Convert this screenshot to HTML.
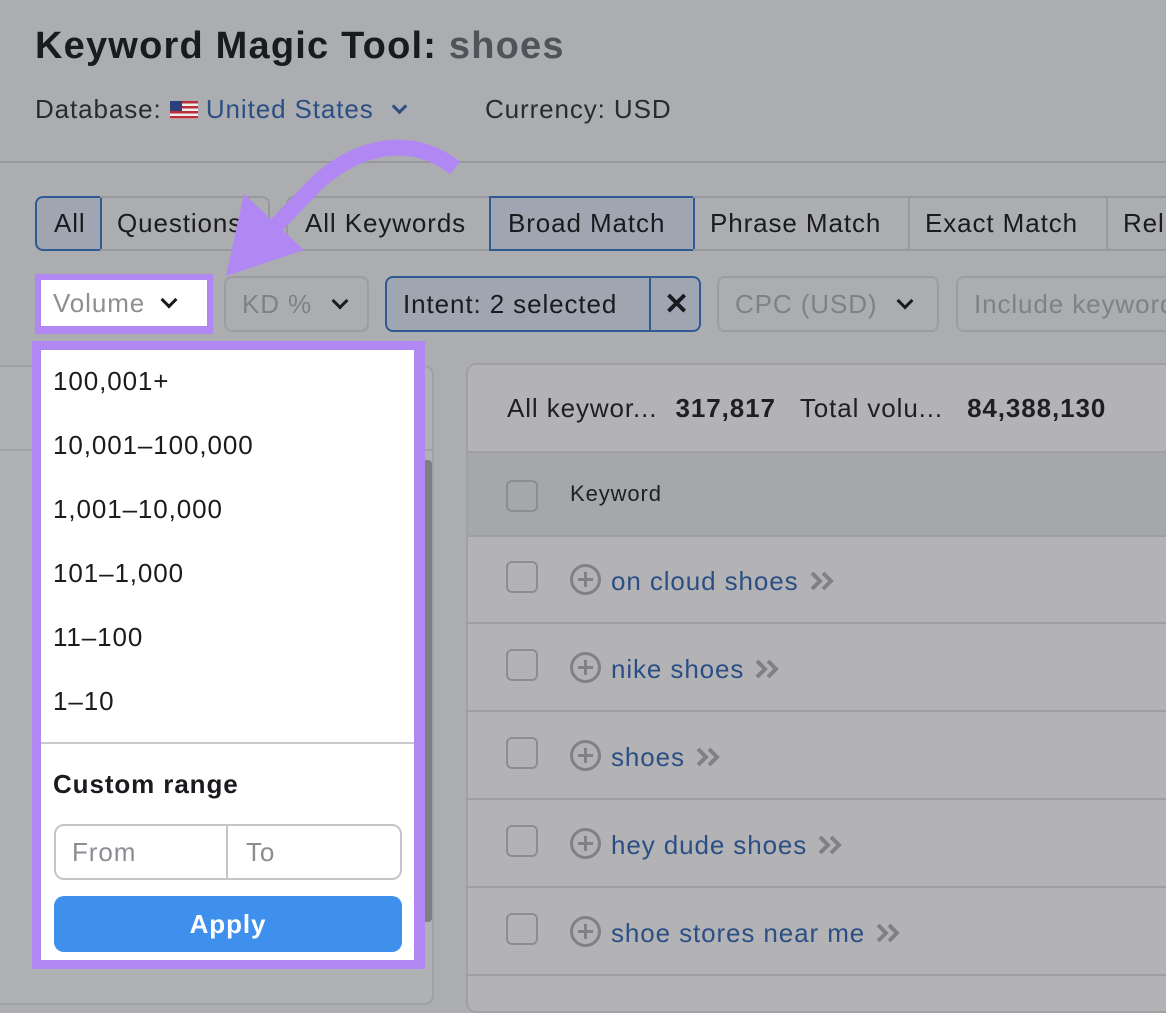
<!DOCTYPE html>
<html><head><meta charset="utf-8"><style>
*{box-sizing:border-box;margin:0;padding:0}
body{width:1166px;height:994px;overflow:hidden;background:#acadb0;font-family:"Liberation Sans",sans-serif;position:relative;color:#1a1b1f;letter-spacing:0.9px}
.a{position:absolute}
.t{white-space:nowrap}
.btn{position:absolute;height:55px;border:2px solid #98999c;font-size:26px;line-height:51px;padding-left:17px;white-space:nowrap}
.sel{background:#a0a6b1;border-color:#2f5b92}
.f{position:absolute;height:56px;border:2px solid #9c9da0;border-radius:8px;font-size:26px;line-height:52px;padding-left:16px;color:#7f8185;white-space:nowrap}
.chev{display:inline-block;width:12px;height:12px;border-right:3.5px solid #1a1b1f;border-bottom:3.5px solid #1a1b1f;transform:rotate(45deg);margin-left:22px;vertical-align:6px}
.cb{position:absolute;left:506px;width:32px;height:32px;border:2px solid #8c8d91;border-radius:6px}
.kw{position:absolute;left:570px;font-size:26px;color:#2b4f85;white-space:nowrap}
.kw .p{display:inline-block;width:31px;height:31px;border:3px solid #808185;border-radius:50%;vertical-align:-5px;margin-right:10px;position:relative}
.kw .p:before{content:"";position:absolute;left:5px;top:11px;width:15px;height:3px;background:#808185}
.kw .p:after{content:"";position:absolute;left:11px;top:5px;width:3px;height:15px;background:#808185}
.kw svg{vertical-align:-2px;margin-left:10px}
.line{position:absolute;left:466px;right:0;height:2px;background:#9e9fa2}
.it{position:absolute;left:53px;font-size:26px;color:#1a1b1f}
</style></head><body>
<div class="a t" style="left:35px;top:25px;font-size:38px;font-weight:bold;letter-spacing:1.2px">Keyword Magic Tool: <span style="color:#505358">shoes</span></div>
<div class="a t" style="left:35px;top:94px;font-size:26px;color:#2a2b2f">Database: <span style="display:inline-block;width:28px;height:18px;background:repeating-linear-gradient(#b8303a 0 2.5px,#eee 2.5px 5px);position:relative;vertical-align:-1px"><span style="position:absolute;left:0;top:0;width:12px;height:10px;background:#2d3f7a"></span></span> <span style="color:#2b4f85">United States</span> <span class="chev" style="border-color:#2b4f85;margin-left:12px;width:11px;height:11px"></span></div>
<div class="a t" style="left:485px;top:94px;font-size:26px;color:#2a2b2f">Currency: USD</div>
<div class="a" style="left:0;top:161px;width:1166px;height:2px;background:#98999c"></div>

<div class="btn sel" style="left:35px;top:196px;width:67px;border-radius:8px 0 0 8px">All</div>
<div class="btn" style="left:100px;top:196px;width:170px;border-radius:0 8px 8px 0;border-left:none">Questions</div>
<div class="btn" style="left:286px;top:196px;width:205px;border-radius:8px 0 0 8px">All Keywords</div>
<div class="btn sel" style="left:489px;top:196px;width:206px">Broad Match</div>
<div class="btn" style="left:693px;top:196px;width:217px;border-left:none">Phrase Match</div>
<div class="btn" style="left:908px;top:196px;width:200px;border-left:none">Exact Match</div>
<div class="btn" style="left:1106px;top:196px;width:100px;border-left:none">Related</div>

<div class="a" style="left:35px;top:274px;width:178px;height:60px;background:#b187f4"></div>
<div class="a t" style="left:41px;top:280px;width:166px;height:46px;background:#fff;font-size:26px;line-height:46px;padding-left:12px;color:#8d8f93">Volume<span class="chev" style="margin-left:18px"></span></div>
<div class="f" style="left:224px;top:276px;width:145px">KD %<span class="chev"></span></div>
<div class="f sel" style="left:385px;top:276px;width:316px;color:#1a1b1f;border-color:#2f5b92">Intent: 2 selected</div>
<div class="a" style="left:649px;top:278px;width:2px;height:52px;background:#2f5b92"></div>
<div class="a" style="left:664px;top:287px;font-size:30px;font-weight:bold;color:#1a1b1f">✕</div>
<div class="f" style="left:717px;top:276px;width:222px">CPC (USD)<span class="chev"></span></div>
<div class="f" style="left:956px;top:276px;width:260px">Include keywords</div>

<div class="a" style="left:-10px;top:365px;width:444px;height:640px;border:2px solid #a0a1a4;border-radius:10px;background:#b0b1b3"></div>
<div class="a" style="left:0;top:449px;width:434px;height:2px;background:#a0a1a4"></div>
<div class="a" style="left:422px;top:460px;width:10px;height:462px;background:#7e7f82;border-radius:4px"></div>

<div class="a" style="left:466px;top:363px;width:720px;height:650px;border:2px solid #a0a1a4;border-radius:10px;background:#b3b3b5;overflow:hidden">
 <div class="a" style="left:0;top:86px;width:720px;height:86px;background:#a6a7aa;border-top:2px solid #9e9fa2;border-bottom:2px solid #9e9fa2"></div>
</div>
<div class="a t" style="left:507px;top:393px;font-size:26px;color:#1e1f23">All keywor... <b style="margin-left:10px">317,817</b><span style="margin-left:24px">Total volu...</span><b style="margin-left:24px">84,388,130</b></div>
<div class="cb" style="top:480px"></div>
<div class="a t" style="left:570px;top:481px;font-size:22px;color:#1e1f23">Keyword</div>
<div class="cb" style="top:561px"></div><div class="kw" style="top:564px"><span class="p"></span>on cloud shoes<svg width="26" height="22"><path d="M3,3 L11,11 L3,19 M14,3 L22,11 L14,19" fill="none" stroke="#808185" stroke-width="4"/></svg></div>
<div class="line" style="top:622px"></div>
<div class="cb" style="top:649px"></div><div class="kw" style="top:652px"><span class="p"></span>nike shoes<svg width="26" height="22"><path d="M3,3 L11,11 L3,19 M14,3 L22,11 L14,19" fill="none" stroke="#808185" stroke-width="4"/></svg></div>
<div class="line" style="top:710px"></div>
<div class="cb" style="top:737px"></div><div class="kw" style="top:740px"><span class="p"></span>shoes<svg width="26" height="22"><path d="M3,3 L11,11 L3,19 M14,3 L22,11 L14,19" fill="none" stroke="#808185" stroke-width="4"/></svg></div>
<div class="line" style="top:798px"></div>
<div class="cb" style="top:825px"></div><div class="kw" style="top:828px"><span class="p"></span>hey dude shoes<svg width="26" height="22"><path d="M3,3 L11,11 L3,19 M14,3 L22,11 L14,19" fill="none" stroke="#808185" stroke-width="4"/></svg></div>
<div class="line" style="top:886px"></div>
<div class="cb" style="top:913px"></div><div class="kw" style="top:916px"><span class="p"></span>shoe stores near me<svg width="26" height="22"><path d="M3,3 L11,11 L3,19 M14,3 L22,11 L14,19" fill="none" stroke="#808185" stroke-width="4"/></svg></div>
<div class="line" style="top:974px"></div>

<div class="a" style="left:32px;top:341px;width:393px;height:628px;background:#b187f4"></div>
<div class="a" style="left:41px;top:350px;width:373px;height:610px;background:#fff"></div>
<div class="it" style="top:366px">100,001+</div>
<div class="it" style="top:430px">10,001–100,000</div>
<div class="it" style="top:494px">1,001–10,000</div>
<div class="it" style="top:558px">101–1,000</div>
<div class="it" style="top:622px">11–100</div>
<div class="it" style="top:686px">1–10</div>
<div class="a" style="left:41px;top:742px;width:373px;height:2px;background:#c8c9cd"></div>
<div class="it" style="top:769px;font-weight:bold">Custom range</div>
<div class="a" style="left:54px;top:824px;width:348px;height:56px;border:2px solid #c4c5c9;border-radius:10px"></div>
<div class="a" style="left:226px;top:826px;width:2px;height:52px;background:#c4c5c9"></div>
<div class="a t" style="left:72px;top:837px;font-size:26px;color:#8b8d93">From</div>
<div class="a t" style="left:246px;top:837px;font-size:26px;color:#8b8d93">To</div>
<div class="a" style="left:54px;top:896px;width:348px;height:56px;background:#3f8fec;border-radius:10px;color:#fff;font-size:26px;font-weight:bold;text-align:center;line-height:56px">Apply</div>

<svg class="a" style="left:0;top:0" width="1166" height="994">
<path d="M455,168 C420,140 370,138 320,180 L262,240" fill="none" stroke="#b187f4" stroke-width="16"/>
<polygon points="244,194 304,250 226,276" fill="#b187f4"/>
</svg>
</body></html>
